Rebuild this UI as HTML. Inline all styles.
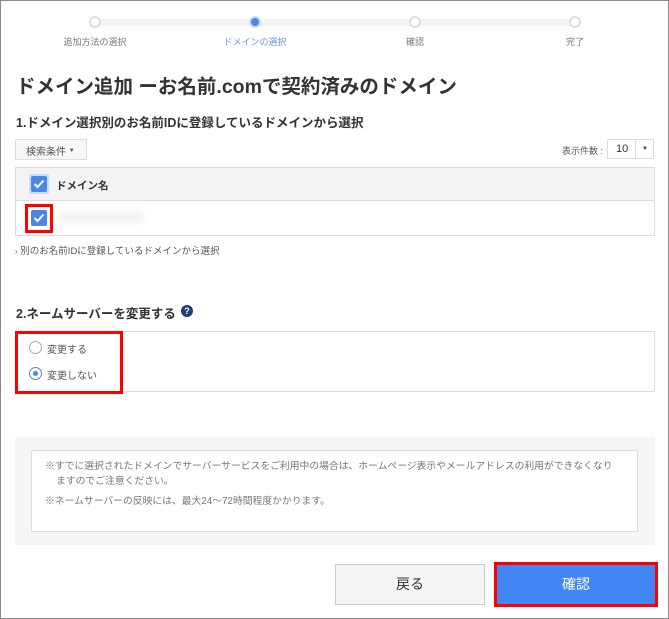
<!DOCTYPE html>
<html><head><meta charset="utf-8"><style>
*{margin:0;padding:0;box-sizing:border-box}
body{width:669px;height:619px;overflow:hidden;background:#fff;font-family:"Liberation Sans","Noto Sans CJK JP",sans-serif;color:#333;position:relative}
.a{position:absolute}
.frame{left:0;top:0;width:669px;height:619px;border:1px solid #8a8a8a}
.c{width:12px;height:12px;border-radius:50%;border:2px solid #ddd;background:#fff;top:16px}
.lbl{font-size:9px;color:#777;top:35px;white-space:nowrap;transform:translateX(-50%)}
.cb{width:16px;height:16px;background:#4a86e8;border-radius:2px}
.cb svg{position:absolute;left:2px;top:3px}
.radio{width:13px;height:13px;border-radius:50%;border:1px solid #aaa;background:#fff}
</style></head><body>
<div class="a frame"></div>
<div class="a" style="left:95px;top:19px;width:480px;height:7px;background:#f4f4f4"></div>
<div class="a c" style="left:89px"></div>
<div class="a c" style="left:249px;background:#4a86e8;border-color:#c9dafa"></div>
<div class="a c" style="left:409px"></div>
<div class="a c" style="left:569px"></div>
<div class="a lbl" style="left:95px">追加方法の選択</div>
<div class="a lbl" style="left:255px;color:#6b8ee6">ドメインの選択</div>
<div class="a lbl" style="left:415px">確認</div>
<div class="a lbl" style="left:575px">完了</div>

<div class="a" style="left:16px;top:70px;font-size:19.5px;font-weight:bold;color:#333;white-space:nowrap">ドメイン追加 ーお名前.comで契約済みのドメイン</div>
<div class="a" style="left:16px;top:112px;font-size:12.5px;font-weight:bold;white-space:nowrap">1.ドメイン選択別のお名前IDに登録しているドメインから選択</div>

<div class="a" style="left:15px;top:139px;width:72px;height:21px;border:1px solid #ddd;background:#f7f7f7;font-size:10px;color:#555;display:flex;align-items:center;padding:2px 0 0 10px">検索条件&nbsp;<span style="font-size:6px">▼</span></div>
<div class="a" style="left:562px;top:144px;font-size:9px;color:#555">表示件数 :</div>
<div class="a" style="left:607px;top:139px;width:47px;height:20px;border:1px solid #ddd;font-size:11px;padding:3px 0 0 8px">10<span style="position:absolute;left:27px;top:0;width:19px;height:18px;border-left:1px solid #ddd;font-size:6px;text-align:center;line-height:18px">▼</span></div>

<div class="a" style="left:15px;top:167px;width:640px;height:69px;border:1px solid #ddd"></div>
<div class="a" style="left:16px;top:168px;width:638px;height:33px;background:#f3f3f3;border-bottom:1px solid #ddd"></div>
<div class="a" style="left:29px;top:174px;width:20px;height:20px;background:#c9dafa;border-radius:2px"></div>
<div class="a cb" style="left:31px;top:176px"><svg width="12" height="10" viewBox="0 0 12 10"><path d="M1.5 5l3 3 6-6.5" stroke="#fff" stroke-width="2" fill="none"/></svg></div>
<div class="a" style="left:56px;top:178px;font-size:10.5px;font-weight:bold">ドメイン名</div>
<div class="a" style="left:25px;top:204px;width:28px;height:29px;border:3px solid #f00"></div>
<div class="a cb" style="left:31px;top:210px"><svg width="12" height="10" viewBox="0 0 12 10"><path d="M1.5 5l3 3 6-6.5" stroke="#fff" stroke-width="2" fill="none"/></svg></div>
<div class="a" style="left:58px;top:212px;width:85px;height:10px;background:#f2f2f2;filter:blur(3px)"></div>
<div class="a" style="left:15px;top:243px;font-size:9.5px;color:#555;white-space:nowrap"><span style="color:#d33;font-size:8px">›</span> 別のお名前IDに登録しているドメインから選択</div>

<div class="a" style="left:16px;top:303px;font-size:12.5px;font-weight:bold;white-space:nowrap">2.ネームサーバーを変更する</div>
<div class="a" style="left:181px;top:305px;width:12px;height:12px;border-radius:50%;background:#1f3d7a;color:#fff;font-size:9px;font-weight:bold;text-align:center;line-height:12px">?</div>
<div class="a" style="left:15px;top:331px;width:640px;height:61px;border:1px solid #ddd"></div>
<div class="a" style="left:15px;top:331px;width:108px;height:63px;border:3px solid #f00"></div>
<div class="a radio" style="left:29px;top:341px"></div>
<div class="a" style="left:47px;top:341px;font-size:10px;color:#555">変更する</div>
<div class="a radio" style="left:29px;top:367px;border-color:#4a86e8"><div style="position:absolute;left:3px;top:3px;width:5px;height:5px;border-radius:50%;background:#4a86e8"></div></div>
<div class="a" style="left:47px;top:367px;font-size:10px;color:#555">変更しない</div>

<div class="a" style="left:15px;top:437px;width:640px;height:108px;background:#f5f5f5"></div>
<div class="a" style="left:31px;top:450px;width:607px;height:82px;background:#fff;border:1px solid #ddd"></div>
<div class="a" style="left:45px;top:459px;width:568px;font-size:9.8px;color:#777;line-height:15px;padding-left:11px;text-indent:-11px">※すでに選択されたドメインでサーバーサービスをご利用中の場合は、ホームページ表示やメールアドレスの利用ができなくなりますのでご注意ください。</div>
<div class="a" style="left:45px;top:493px;font-size:9.8px;color:#777;white-space:nowrap">※ネームサーバーの反映には、最大24～72時間程度かかります。</div>

<div class="a" style="left:335px;top:564px;width:150px;height:41px;background:#f5f5f5;border:1px solid #ccc;font-size:14px;text-align:center;line-height:39px;color:#333">戻る</div>
<div class="a" style="left:494px;top:562px;width:164px;height:45px;border:3px solid #f00;background:#4285f4;color:#fff;font-size:14px;text-align:center;line-height:39px">確認</div>
</body></html>
